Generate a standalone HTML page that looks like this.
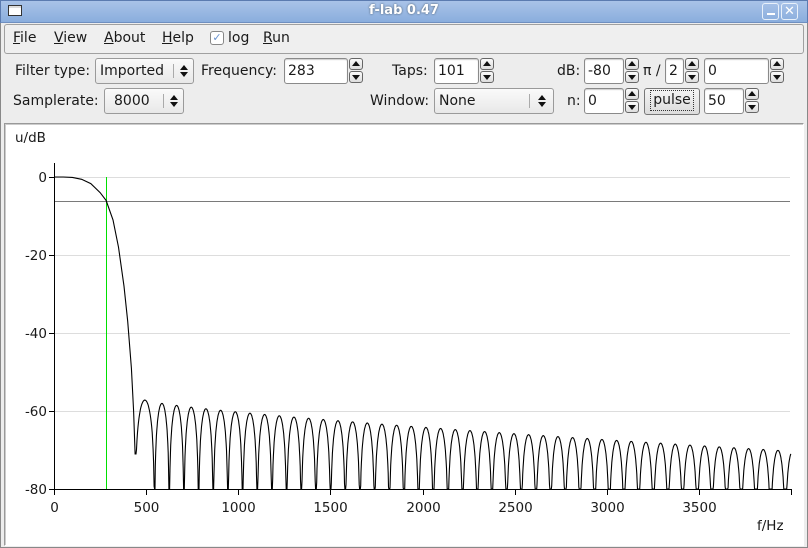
<!DOCTYPE html>
<html><head><meta charset="utf-8"><style>
*{margin:0;padding:0;box-sizing:border-box}
body{width:808px;height:548px;background:#ededed;font-family:"DejaVu Sans","Liberation Sans",sans-serif;font-size:14px;color:#1a1a1a;position:relative;overflow:hidden}
.a{position:absolute;white-space:nowrap}
.t{position:absolute;white-space:nowrap;line-height:16px}
.box{position:absolute;background:#fff;border:1px solid #8a8a8a;border-radius:3px;box-shadow:inset 0 1px 1px #ccc;padding-left:3px;line-height:24px}
.combo{position:absolute;background:linear-gradient(#fafafa,#e8e8e8);border:1px solid #9a9a9a;border-radius:3px;padding-left:4px;line-height:24px}
.combo .sep{position:absolute;top:5px;bottom:5px;width:1px;background:#aaa}
.spin{position:absolute;width:14px;height:26px}
.spin div{height:12px;margin-bottom:1px;border:1px solid #666;border-radius:3px;background:linear-gradient(#fafafa,#ddd);position:relative}
.up:after{content:"";position:absolute;left:2px;top:2px;border-left:4px solid transparent;border-right:4px solid transparent;border-bottom:5px solid #111}
.dn:after{content:"";position:absolute;left:2px;top:3px;border-left:4px solid transparent;border-right:4px solid transparent;border-top:5px solid #111}
.ud{position:absolute;width:8px;height:12px}
.ud:before{content:"";position:absolute;left:0;top:0;border-left:4px solid transparent;border-right:4px solid transparent;border-bottom:5px solid #111}
.ud:after{content:"";position:absolute;left:0;top:7px;border-left:4px solid transparent;border-right:4px solid transparent;border-top:5px solid #111}
u{text-decoration:underline}
</style></head><body>
<div class="a" style="left:0;top:0;width:808px;height:23px;background:linear-gradient(#a9c3e8,#8aaedd);border:1px solid #5b7bb0;border-bottom-color:#6f8fc0"></div>
<div class="a" style="left:8px;top:5px;width:14px;height:11px;border:1px solid #333;background:#fff;box-shadow:inset 0 2px 0 #ddd"></div>
<div class="t" style="left:0;width:808px;top:3px;text-align:center;color:#fff;font-size:13px;font-weight:bold;text-shadow:0 0 2px #456">f-lab 0.47</div>
<div class="a" style="left:762px;top:3px;width:17px;height:17px;border:1px solid #e8f0fa;border-radius:3px"></div>
<div class="a" style="left:767px;top:13px;width:8px;height:2px;background:#fff"></div>
<div class="a" style="left:781px;top:3px;width:17px;height:17px;border:1px solid #e8f0fa;border-radius:3px;color:#fff;font-size:13px;line-height:15px;text-align:center">✕</div>
<div class="a" style="left:0;top:23px;width:1px;height:525px;background:#888"></div>
<div class="a" style="left:807px;top:23px;width:1px;height:525px;background:#888"></div>
<div class="a" style="left:0;top:547px;width:808px;height:1px;background:#888"></div>

<div class="a" style="left:4px;top:24px;width:800px;height:30px;border:1px solid #a0a0a0;border-radius:3px;background:#efefef"></div>
<div class="t" style="left:13px;top:30px;font-size:14px"><u>F</u>ile</div>
<div class="t" style="left:54px;top:30px;font-size:14px"><u>V</u>iew</div>
<div class="t" style="left:104px;top:30px;font-size:14px"><u>A</u>bout</div>
<div class="t" style="left:162px;top:30px;font-size:14px"><u>H</u>elp</div>
<div class="a" style="left:210px;top:31px;width:14px;height:14px;border:1px solid #888;border-radius:3px;background:#fff;color:#6a93d0;font-size:11px;line-height:12px;text-align:center">✓</div>
<div class="t" style="left:228px;top:30px;font-size:14px">log</div>
<div class="t" style="left:263px;top:30px;font-size:14px"><u>R</u>un</div>

<div class="t" style="left:15px;top:63px">Filter type:</div>
<div class="combo" style="left:95px;top:58px;width:99px;height:26px">Imported<div class="sep" style="left:77px"></div><div class="ud" style="left:84px;top:6px"></div></div>
<div class="t" style="left:201px;top:63px">Frequency:</div>
<div class="box" style="left:284px;top:58px;width:64px;height:26px">283</div>
<div class="spin" style="left:349px;top:58px"><div class="up"></div><div class="dn"></div></div>
<div class="t" style="left:392px;top:63px">Taps:</div>
<div class="box" style="left:434px;top:58px;width:45px;height:26px">101</div>
<div class="spin" style="left:480px;top:58px"><div class="up"></div><div class="dn"></div></div>
<div class="t" style="left:557px;top:63px">dB:</div>
<div class="box" style="left:584px;top:58px;width:40px;height:26px">-80</div>
<div class="spin" style="left:625px;top:58px"><div class="up"></div><div class="dn"></div></div>
<div class="t" style="left:643px;top:63px">π /</div>
<div class="box" style="left:665px;top:58px;width:19px;height:26px;padding-left:3px">2</div>
<div class="spin" style="left:685px;top:58px"><div class="up"></div><div class="dn"></div></div>
<div class="box" style="left:704px;top:58px;width:65px;height:26px">0</div>
<div class="spin" style="left:770px;top:58px"><div class="up"></div><div class="dn"></div></div>

<div class="t" style="left:13px;top:93px">Samplerate:</div>
<div class="combo" style="left:104px;top:88px;width:80px;height:26px;padding-left:9px">8000<div class="sep" style="left:58px"></div><div class="ud" style="left:65px;top:6px"></div></div>
<div class="t" style="left:370px;top:93px">Window:</div>
<div class="combo" style="left:434px;top:88px;width:120px;height:26px">None<div class="sep" style="left:94px"></div><div class="ud" style="left:103px;top:6px"></div></div>
<div class="t" style="left:567px;top:93px">n:</div>
<div class="box" style="left:584px;top:88px;width:40px;height:26px">0</div>
<div class="spin" style="left:625px;top:88px"><div class="up"></div><div class="dn"></div></div>
<div class="a" style="left:644px;top:88px;width:56px;height:27px;border:1px solid #777;border-radius:3px;background:linear-gradient(#f4f4f4,#dcdcdc);text-align:center;line-height:23px"><span style="display:inline-block;outline:1px dotted #333;padding:0 2px;line-height:19px;margin-top:2px">pulse</span></div>
<div class="box" style="left:704px;top:88px;width:40px;height:26px">50</div>
<div class="spin" style="left:745px;top:88px"><div class="up"></div><div class="dn"></div></div>

<div class="a" style="left:4px;top:123px;width:800px;height:423px;border:1px solid #999;border-right-color:#fff;border-bottom-color:#fff;background:#fff;box-shadow:inset 1px 1px 0 #ccc"></div>
<svg class="a" style="left:0;top:0" width="808" height="548" font-family="DejaVu Sans, Liberation Sans, sans-serif" font-size="13.5" fill="#1a1a1a">
<text x="15" y="142">u/dB</text>
<g stroke="#ddd" stroke-width="1">
<line x1="54" y1="177.5" x2="790" y2="177.5"/>
<line x1="54" y1="255.5" x2="790" y2="255.5"/>
<line x1="54" y1="333.5" x2="790" y2="333.5"/>
<line x1="54" y1="411.5" x2="790" y2="411.5"/>
</g>
<line x1="54" y1="201.5" x2="790" y2="201.5" stroke="#7a7a7a"/>
<line x1="106.5" y1="177" x2="106.5" y2="489" stroke="#00e000"/>
<g stroke="#000" stroke-width="1">
<line x1="54.5" y1="163" x2="54.5" y2="490"/>
<line x1="54" y1="489.5" x2="791" y2="489.5"/>
<line x1="49" y1="177.5" x2="54" y2="177.5"/><line x1="49" y1="255.5" x2="54" y2="255.5"/><line x1="49" y1="333.5" x2="54" y2="333.5"/><line x1="49" y1="411.5" x2="54" y2="411.5"/><line x1="49" y1="489.5" x2="54" y2="489.5"/>
<g id="xt"></g>
</g>
<g text-anchor="end"><text x="47" y="182">0</text><text x="47" y="260">-20</text><text x="47" y="338">-40</text><text x="47" y="416">-60</text><text x="47" y="494">-80</text></g>
<g text-anchor="middle" id="xl"></g>
<text x="757" y="530">f/Hz</text>
<path id="curve" fill="none" stroke="#000" stroke-width="1.1"/>
</svg>
<script>
var X=function(f){return 54+f*0.18425},Y=function(d){return 177+(-d)*3.9};
var xt=document.getElementById('xt'),xl=document.getElementById('xl'),ns='http://www.w3.org/2000/svg';
for(var f=0;f<=4000;f+=500){var x=Math.round(X(f))+.5;var l=document.createElementNS(ns,'line');l.setAttribute('x1',x);l.setAttribute('x2',x);l.setAttribute('y1',489);l.setAttribute('y2',495);xt.appendChild(l);
if(f<4000){var t=document.createElementNS(ns,'text');t.setAttribute('x',x);t.setAttribute('y',512);t.textContent=f;xl.appendChild(t);}}
var pts=[[0,0],[50,0],[100,-0.1],[150,-0.6],[200,-1.7],[250,-4],[283,-6],[320,-11],[350,-18],[380,-28],[400,-37],[420,-49],[432,-60],[440,-71]];
var d='M'+X(0)+','+Y(0);
for(var i=1;i<pts.length;i++)d+='L'+X(pts[i][0]).toFixed(1)+','+Y(pts[i][1]).toFixed(1);
var nulls=[440];for(var k=0;;k++){var n=546+79.6*k;if(n>4060)break;nulls.push(n);}
for(var i=0;i<nulls.length-1;i++){var a=nulls[i],b=nulls[i+1],mid=(a+b)/2;
var pk=-57.2-12.8*Math.pow(Math.max(0,(mid-493)/3400),0.75);
for(var s=1;s<=40;s++){var f=a+(b-a)*s/40;if(f>4000)break;var v=pk+20*Math.log10(Math.max(1e-6,Math.sin(Math.PI*s/40)));if(i==0&&s<20&&v<-71)v=-71;if(v<-80)v=-80;d+='L'+X(f).toFixed(1)+','+Y(v).toFixed(1);}}
document.getElementById('curve').setAttribute('d',d);
</script>
</body></html>
